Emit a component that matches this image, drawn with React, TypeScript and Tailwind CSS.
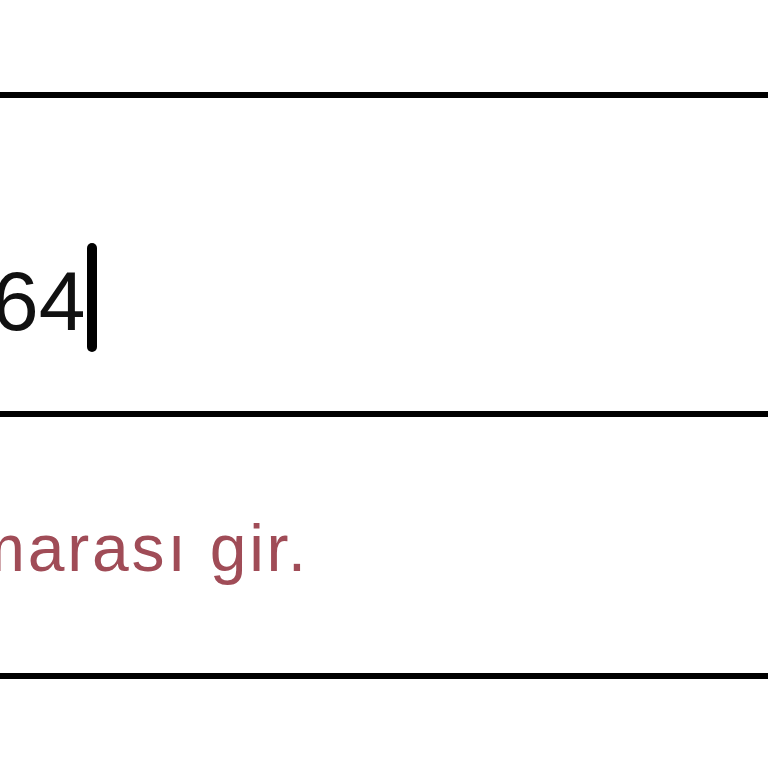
export default function App() {
  return (
    <div className="w-[768px] h-[768px] overflow-hidden bg-white font-['Liberation_Sans',Arial,sans-serif]">
      <div className="flex flex-col pt-[92px]">
        {/* phone input */}
        <div className="h-[325px] border-y-[6px] border-black flex items-start pt-[145px]">
          <span className="ml-[-8px] mt-[16px] text-[84px] leading-none text-[#111] whitespace-nowrap">
            64
          </span>
          <div className="ml-[2px] w-[10px] h-[109px] rounded-full bg-black" />
        </div>
        {/* helper text */}
        <div className="h-[262px] border-b-[6px] border-black pt-[98px]">
          <p className="ml-[-109px] text-[66px] leading-none tracking-[2.8px] text-[#a04c57] whitespace-nowrap">
            numarası gir.
          </p>
        </div>
      </div>
    </div>
  );
}
